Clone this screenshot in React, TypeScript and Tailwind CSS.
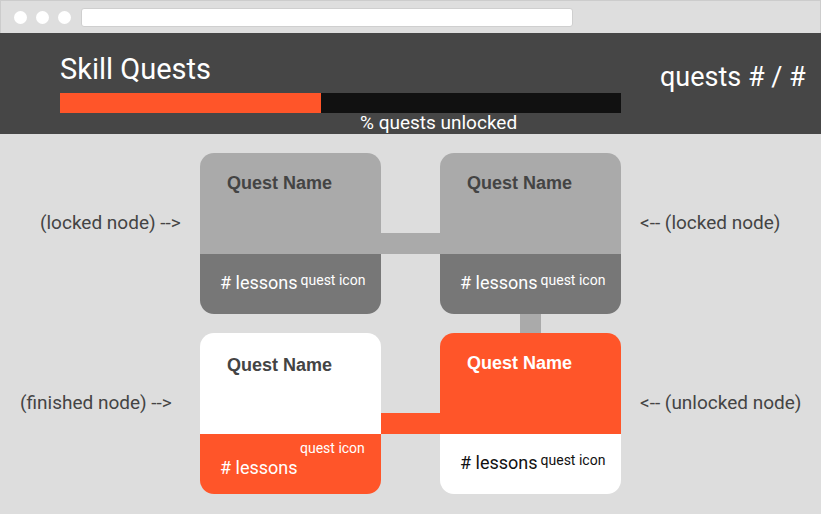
import React from "react";

const roboto = { fontFamily: "Roboto, 'Liberation Sans', sans-serif" };

type Variant = "locked" | "finished" | "unlocked";

function Card({ variant }: { variant: Variant }) {
  const top =
    variant === "locked"
      ? "bg-[#aaaaaa] text-[#444444]"
      : variant === "finished"
      ? "bg-white text-[#444444]"
      : "bg-[#ff5529] text-white";
  const bottom =
    variant === "locked"
      ? "bg-[#777777] text-white"
      : variant === "finished"
      ? "bg-[#ff5529] text-white"
      : "bg-white text-[#111111]";
  return (
    <div className="w-[181px] h-[161px] rounded-[14px] overflow-hidden flex flex-col shrink-0">
      <div className={`h-[101px] ${top} ${variant === "finished" ? "pt-[22px]" : "pt-[20px]"} pl-[27px]`}>
        <div
          className="text-[18px] leading-[20px] font-bold"
          style={{ fontFamily: "'Liberation Sans', Arial, sans-serif" }}
        >
          Quest Name
        </div>
      </div>
      {variant === "finished" ? (
        <div className={`h-[60px] ${bottom} pt-[6px] pl-[20px]`} style={roboto}>
          <div className="text-[14px] leading-[17px] pl-[80px]">quest icon</div>
          <div className="text-[18px] leading-[22px]"># lessons</div>
        </div>
      ) : (
        <div className={`h-[60px] ${bottom} pt-[18px] pl-[20px] flex items-start gap-[3px]`} style={roboto}>
          <span className="text-[18px] leading-[22px]"># lessons</span>
          <span className="text-[14px] leading-[17px]">quest icon</span>
        </div>
      )}
    </div>
  );
}

export default function App() {
  return (
    <div className="w-[821px] h-[514px] flex flex-col bg-[#dddddd] overflow-hidden" style={roboto}>
      {/* browser chrome */}
      <div className="h-[33px] bg-[#dedede] border-t border-x border-[#cccccc] flex items-center pl-[13px] gap-[9px] shrink-0">
        <div className="w-[13px] h-[13px] rounded-full bg-white" />
        <div className="w-[13px] h-[13px] rounded-full bg-white" />
        <div className="w-[13px] h-[13px] rounded-full bg-white" />
        <div className="ml-[1px] w-[492px] h-[19px] rounded-[3px] bg-white border border-[#cfcfcf]" />
      </div>
      {/* header */}
      <div className="h-[101px] bg-[#464646] flex text-white shrink-0">
        <div className="pl-[60px] pt-[20px]">
          <div className="text-[29px] leading-[32px]">Skill Quests</div>
          <div className="mt-[8px] w-[561px] h-[20px] bg-[#111111] flex">
            <div className="w-[261px] h-full bg-[#ff5529]" />
          </div>
          <div className="ml-[300px] text-[19px] leading-[20px]">% quests unlocked</div>
        </div>
        <div className="pl-[39px] pt-[28px] text-[27px] leading-[32px]">quests # / #</div>
      </div>
      {/* body */}
      <div className="pt-[19px] flex flex-col text-[#444444]">
        <div className="flex h-[161px]">
          <div className="w-[200px] pl-[40px] pt-[59px] text-[19px] leading-[22px]">(locked node) --&gt;</div>
          <Card variant="locked" />
          <div className="w-[59px] pt-[80px]">
            <div className="h-[21px] bg-[#aaaaaa]" />
          </div>
          <Card variant="locked" />
          <div className="pl-[19px] pt-[59px] text-[19px] leading-[22px]">&lt;-- (locked node)</div>
        </div>
        <div className="h-[19px] pl-[520px]">
          <div className="w-[21px] h-full bg-[#aaaaaa]" />
        </div>
        <div className="flex h-[161px]">
          <div className="w-[200px] pl-[20px] pt-[59px] text-[19px] leading-[22px]">(finished node) --&gt;</div>
          <Card variant="finished" />
          <div className="w-[59px] pt-[80px]">
            <div className="h-[21px] bg-[#ff5529]" />
          </div>
          <Card variant="unlocked" />
          <div className="pl-[19px] pt-[59px] text-[19px] leading-[22px]">&lt;-- (unlocked node)</div>
        </div>
      </div>
    </div>
  );
}
